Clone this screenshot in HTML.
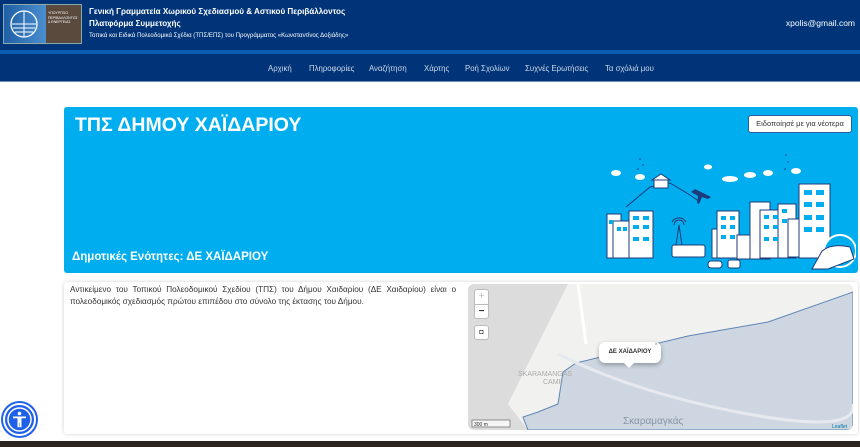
<!DOCTYPE html>
<html><head><meta charset="utf-8"><style>
*{margin:0;padding:0;box-sizing:border-box}
body{width:860px;height:447px;overflow:hidden;background:#fff;font-family:"Liberation Sans",sans-serif;position:relative}
.hdr{position:absolute;left:0;top:0;width:860px;height:50px;background:#003478}
.logo{position:absolute;left:3px;top:4px;width:79px;height:40px;display:flex;border:1px solid #8aa}
.logo .a{width:42px;background:linear-gradient(90deg,#1f5fa5,#4b8fd0);position:relative}
.logo .b{flex:1;background:#5a4a3e;color:#fff;font-size:3.5px;padding:6px 2px;line-height:4.5px}
.t1{position:absolute;left:89px;top:7px;color:#fff;font-weight:bold;font-size:8.1px}
.t2{position:absolute;left:89px;top:19px;color:#fff;font-weight:bold;font-size:8.1px}
.t3{position:absolute;left:89px;top:32px;color:#fff;font-size:6.1px}
.mail{position:absolute;right:5px;top:18px;color:#fff;font-size:8.5px}
.stripe{position:absolute;top:50px;left:0;width:860px;height:4px;background:#0c5cb0}
.nav{position:absolute;top:54px;left:0;width:860px;height:28px;background:#003478;border-bottom:1px solid #6b8ab8}
.nav span{position:absolute;top:10px;color:#cfd9ea;font-size:7.8px}
.card{position:absolute;left:64px;top:107px;width:794px;height:166px;background:#00aeef;border-radius:3px}
.card h1{position:absolute;left:11px;top:7px;color:#fff;font-size:19.5px;font-weight:bold}
.card h2{position:absolute;left:8px;top:144px;color:#fff;font-size:11.5px;font-weight:bold}
.btn{position:absolute;right:6px;top:8px;width:104px;height:18px;background:#fff;border:1px solid #2a5d9a;border-radius:3px;font-size:7.5px;color:#333;text-align:center;line-height:16px}
.box{position:absolute;left:64px;top:282px;width:794px;height:152px;background:#fff;box-shadow:0 0 4px rgba(0,0,0,.18);border-radius:3px}
.txt{position:absolute;left:6px;top:2px;width:386px;font-size:8.2px;color:#333;line-height:12px;text-align:justify}
.map{position:absolute;left:404px;top:2px;width:385px;height:146px;border-radius:6px;overflow:hidden;background:#ececec}
.ctl{position:absolute;left:6px;width:15px;height:15px;background:#fff;border:1px solid #bbb;font-size:10px;text-align:center;line-height:13px;color:#333}
.foot{position:absolute;top:441px;left:0;width:860px;height:6px;background:#2b2522}
.acc{position:absolute;left:3px;top:403px;width:33px;height:33px;border-radius:50%;background:#2060e8;border:2px solid #fff;box-shadow:0 0 0 2px #2060e8}
</style></head><body>
<div class="hdr">
<div class="logo"><div class="a"><svg width="42" height="38" viewBox="0 0 42 38"><circle cx="20" cy="19" r="13" fill="none" stroke="#fff" stroke-width="1.3"/><path d="M8 19h24M9 23h22M11 27h18M20 6v26" stroke="#fff" stroke-width="1"/></svg></div><div class="b">ΥΠΟΥΡΓΕΙΟ<br>ΠΕΡΙΒΑΛΛΟΝΤΟΣ<br>&amp; ΕΝΕΡΓΕΙΑΣ</div></div>
<div class="t1">Γενική Γραμματεία Χωρικού Σχεδιασμού &amp; Αστικού Περιβάλλοντος</div>
<div class="t2">Πλατφόρμα Συμμετοχής</div>
<div class="t3">Τοπικά και Ειδικά Πολεοδομικά Σχέδια (ΤΠΣ/ΕΠΣ) του Προγράμματος «Κωνσταντίνος Δοξιάδης»</div>
<div class="mail">xpolis@gmail.com</div>
</div>
<div class="stripe"></div>
<div class="nav"><span style="left:268px">Αρχική</span><span style="left:309px">Πληροφορίες</span><span style="left:369px">Αναζήτηση</span><span style="left:424px">Χάρτης</span><span style="left:465px">Ροή Σχολίων</span><span style="left:525px">Συχνές Ερωτήσεις</span><span style="left:605px">Τα σχόλιά μου</span></div>
<div class="card">
<h1>ΤΠΣ ΔΗΜΟΥ ΧΑΪΔΑΡΙΟΥ</h1>
<div class="btn">Ειδοποίησέ με για νέοτερα</div>
<h2>Δημοτικές Ενότητες: ΔΕ ΧΑΪΔΑΡΙΟΥ</h2>
<svg style="position:absolute;left:536px;top:40px" width="256" height="126" viewBox="0 0 256 126" fill="#fff" stroke="#1d3b7a" stroke-width="1">
<path d="M26 60 L50 40 L70 36 L90 48 L100 55" fill="none"/>
<rect x="54" y="33" width="14" height="8"/><path d="M52 33 L61 27 L70 33 Z"/>
<rect x="7" y="67" width="14" height="44"/><rect x="13" y="74" width="18" height="37"/><rect x="29" y="64" width="24" height="47"/>
<g fill="#00aeef" stroke="none"><rect x="33" y="69" width="6" height="4"/><rect x="43" y="69" width="6" height="4"/><rect x="33" y="78" width="6" height="4"/><rect x="43" y="78" width="6" height="4"/><rect x="33" y="90" width="6" height="4"/><rect x="43" y="90" width="6" height="4"/><rect x="17" y="80" width="4" height="4"/><rect x="23" y="80" width="4" height="4"/><rect x="9" y="73" width="4" height="4"/></g>
<path d="M76 98 L79 78 L82 98" fill="none"/><path d="M72 75 a8 8 0 0 1 14 0 M74 78 a5 5 0 0 1 10 0" fill="none"/>
<rect x="72" y="98" width="33" height="12" rx="2"/>
<path d="M95 42 l16 8 l-3 2 l-6 -2 l-3 7 l-2 -1 l1 -7 l-7 -4z" fill="#1d3b7a" stroke="none"/>
<rect x="112" y="82" width="20" height="29"/><rect x="117" y="64" width="22" height="47"/>
<rect x="137" y="88" width="18" height="24"/><rect x="150" y="55" width="20" height="57"/>
<rect x="160" y="63" width="22" height="48"/><rect x="178" y="57" width="18" height="54"/><rect x="188" y="72" width="14" height="38"/>
<rect x="199" y="37" width="31" height="74"/>
<g fill="#00aeef" stroke="none">
<rect x="121" y="69" width="5" height="4"/><rect x="130" y="69" width="5" height="4"/><rect x="121" y="78" width="5" height="4"/><rect x="130" y="78" width="5" height="4"/><rect x="121" y="88" width="5" height="4"/><rect x="130" y="88" width="5" height="4"/>
<rect x="164" y="68" width="5" height="4"/><rect x="173" y="68" width="5" height="4"/><rect x="164" y="78" width="5" height="4"/><rect x="173" y="78" width="5" height="4"/><rect x="164" y="90" width="5" height="4"/><rect x="173" y="90" width="5" height="4"/>
<rect x="204" y="43" width="8" height="5"/><rect x="216" y="43" width="8" height="5"/><rect x="204" y="55" width="8" height="5"/><rect x="216" y="55" width="8" height="5"/><rect x="204" y="68" width="8" height="5"/><rect x="216" y="68" width="8" height="5"/><rect x="204" y="80" width="8" height="5"/><rect x="216" y="80" width="8" height="5"/>
<rect x="182" y="62" width="5" height="4"/><rect x="182" y="72" width="5" height="4"/>
</g>
<circle cx="240" cy="104" r="16" fill="#00aeef" stroke="#fff" stroke-width="2"/>
<path d="M212 122 L222 104 Q232 96 250 100 L254 112 L228 122 Z"/>
<rect x="108" y="114" width="14" height="7" rx="3"/><rect x="128" y="113" width="12" height="8" rx="2"/>
<g fill="#fff" stroke="none"><ellipse cx="16" cy="26" rx="5" ry="3"/><ellipse cx="40" cy="30" rx="5" ry="3"/><ellipse cx="108" cy="20" rx="4" ry="2.5"/><ellipse cx="130" cy="32" rx="8" ry="3"/><ellipse cx="150" cy="28" rx="6" ry="3"/><ellipse cx="168" cy="26" rx="5" ry="3"/><ellipse cx="196" cy="24" rx="5" ry="3"/></g>
<g fill="#1d3b7a" stroke="none"><circle cx="40" cy="12" r=".8"/><circle cx="43" cy="18" r=".8"/><circle cx="38" cy="22" r=".8"/><circle cx="186" cy="8" r=".8"/><circle cx="188" cy="15" r=".8"/><circle cx="185" cy="22" r=".8"/></g>
</svg>
</div>
<div class="box">
<div class="txt">Αντικείμενο του Τοπικού Πολεοδομικού Σχεδίου (ΤΠΣ) του Δήμου Χαιδαρίου (ΔΕ Χαιδαρίου) είναι ο πολεοδομικός σχεδιασμός πρώτου επιπέδου στο σύνολο της έκτασης του Δήμου.</div>
<div class="map">
<svg width="385" height="146" style="position:absolute;left:0;top:0">
<rect width="385" height="146" fill="#dcdcdc"/>
<path d="M100 0 H385 V146 H60 L40 120 L70 60 Z" fill="#f1f2f0"/>
<path d="M108 79 L220 52 L300 38 L385 8 V146 H60 L55 133 L70 128 L90 120 L95 88 Z" fill="#cdd6e1" stroke="#5f85b5" stroke-width="1"/>
<path d="M110 0 L118 60" stroke="#fff" stroke-width="3" fill="none"/>
<path d="M90 70 Q170 110 280 130 T385 120" stroke="#e6eaee" stroke-width="3" fill="none"/>
<text x="50" y="92" font-size="7" fill="#aaa" font-family="Liberation Sans">SKARAMANGAS</text>
<text x="75" y="100" font-size="7" fill="#aaa" font-family="Liberation Sans">CAMP</text>
<text x="155" y="140" font-size="10" fill="#8895a5" font-family="Liberation Sans">Σκαραμαγκάς</text>
<rect x="4" y="136" width="38" height="7" fill="#fff" fill-opacity=".7" stroke="#777" stroke-width=".8"/>
<text x="6" y="142" font-size="5" fill="#333" font-family="Liberation Sans">300 m</text>
<text x="364" y="144" font-size="5" fill="#0078a8" font-family="Liberation Sans">Leaflet</text>
</svg>
<div class="ctl" style="top:5px;color:#bbb;border-bottom:none;border-radius:3px 3px 0 0">+</div>
<div class="ctl" style="top:20px;border-radius:0 0 3px 3px;font-weight:bold">−</div>
<div class="ctl" style="top:41px;border-radius:3px;font-size:7px">◘</div>
<div style="position:absolute;left:131px;top:58px;width:62px;height:21px;background:#fff;border-radius:6px;box-shadow:0 2px 5px rgba(0,0,0,.3);font-size:6px;font-weight:bold;text-align:center;line-height:21px;color:#333">ΔΕ ΧΑΪΔΑΡΙΟΥ<span style="position:absolute;right:3px;top:-7px;color:#999;font-weight:normal">×</span></div>
<div style="position:absolute;left:156px;top:79px;width:0;height:0;border-left:5px solid transparent;border-right:5px solid transparent;border-top:5px solid #fff"></div>
</div>
</div>
<div class="acc"><svg width="29" height="29" viewBox="0 0 29 29"><circle cx="14.5" cy="14.5" r="11.5" fill="none" stroke="#fff" stroke-width="1.5"/><circle cx="14.5" cy="8.5" r="1.8" fill="#fff"/><path d="M8 11.5h13v1.8h-4.5v9h-1.8v-4.5h-0.4v4.5h-1.8v-9H8z" fill="#fff"/></svg></div>
<div class="foot"></div>
</body></html>
